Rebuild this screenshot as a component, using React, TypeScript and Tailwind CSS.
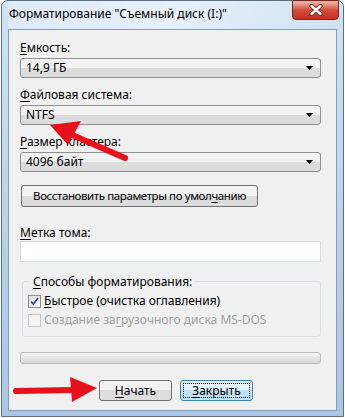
import type { ReactNode } from 'react'

const FONT = { fontFamily: '"Noto Sans", "Open Sans", sans-serif' }

function Key({ children }: { children: ReactNode }) {
  return <span className="underline decoration-1 underline-offset-2">{children}</span>
}

function Combo({ value }: { value: string }) {
  return (
    <div className="flex h-[20px] items-center justify-between rounded-[3px] border border-[#8e8f8f] bg-gradient-to-b from-[#f2f2f2] from-50% to-[#dcdcdc] to-50% pl-[5px] pr-[7px]">
      <span className="leading-none">{value}</span>
      <svg width="7" height="4" viewBox="0 0 7 4">
        <path d="M0 0h7L3.5 4z" fill="#000" />
      </svg>
    </div>
  )
}

function Label({ children, className = '' }: { children: ReactNode; className?: string }) {
  return <div className={`h-[16px] leading-[16px] ${className}`}>{children}</div>
}

export default function App() {
  return (
    <div className="relative h-[418px] w-[345px] overflow-hidden bg-white text-[12px] text-black" style={FONT}>
      {/* window frame */}
      <div className="ml-[1px] flex h-[417px] w-[343px] flex-col rounded-t-[7px] border border-[#5b6f85] bg-gradient-to-b from-[#d3e3f3] via-[#bcd4ec] to-[#a9c6e4] px-[6px] pb-[5px]">
        <div className="relative flex h-[28px] items-center">
          <div className="absolute inset-0 bg-gradient-to-r from-white/30 via-white/50 to-transparent" />
          <span className="relative pl-[1px] pb-[3px] text-[12px] text-black">Форматирование "Съемный диск (I:)"</span>
          <div className="absolute -top-[1px] right-[-2px] flex h-[20px] w-[47px] items-center justify-center rounded-b-[4px] border border-[#6d2a23] bg-gradient-to-b from-[#e9a99c] from-10% via-[#d24d3a] via-50% to-[#c9301f]">
            <svg width="14" height="12" viewBox="0 0 14 12">
              <path d="M2.5 2L11.5 10M11.5 2L2.5 10" stroke="#5a1d16" strokeWidth="4.2" strokeLinecap="round" />
              <path d="M2.5 2L11.5 10M11.5 2L2.5 10" stroke="#ffffff" strokeWidth="2.4" strokeLinecap="round" />
            </svg>
          </div>
        </div>

        {/* client area */}
        <div className="flex flex-1 flex-col border border-[#7f9db9] bg-[#f0f0f0] pl-[11px] pr-[15px]">
          <Label className="mt-[10px]">
            <Key>Е</Key>мкость:
          </Label>
          <div className="mt-[2px]">
            <Combo value="14,9 ГБ" />
          </div>
          <Label className="mt-[9px]">
            <Key>Ф</Key>айловая система:
          </Label>
          <div className="mt-[2px]">
            <Combo value="NTFS" />
          </div>
          <Label className="mt-[9px]">
            <Key>Р</Key>азмер кластера:
          </Label>
          <div className="mt-[2px]">
            <Combo value="4096 байт" />
          </div>

          <button className="mt-[13px] ml-[1px] h-[22px] w-[237px] whitespace-nowrap rounded-[3px] border border-[#707070] bg-gradient-to-b from-[#f2f2f2] from-50% to-[#dddddd] to-50% text-[11.5px] tracking-[-0.4px]">
            Восстановить параметры по умол<Key>ч</Key>анию
          </button>

          <Label className="mt-[18px]">
            <Key>М</Key>етка тома:
          </Label>
          <div className="h-[21px] border border-[#d5dbe3] bg-white" />

          <fieldset className="mt-[12px] ml-[2px] h-[63px] rounded-[3px] border border-[#d5dfe5] pl-[5px]">
            <legend className="ml-[2px] px-[3px] leading-[15px]">
              <Key>С</Key>пособы форматирования:
            </legend>
            <div className="mt-[4px] flex h-[16px] items-center gap-[3px]">
              <span className="flex h-[13px] w-[13px] items-center justify-center border border-[#8e8f8f] bg-gradient-to-br from-[#dcdcdc] to-[#fbfbfb]">
                <svg width="9" height="9" viewBox="0 0 9 9">
                  <path d="M1 4.5l2.3 2.5L8 1" stroke="#3a4e8e" strokeWidth="1.8" fill="none" />
                </svg>
              </span>
              <span>
                <Key>Б</Key>ыстрое (очистка оглавления)
              </span>
            </div>
            <div className="mt-[3px] flex h-[16px] items-center gap-[3px] text-[#a0a0a0]">
              <span className="h-[13px] w-[13px] border border-[#c8c8c8] bg-[#f4f4f4]" />
              <span>
                Создание за<Key>г</Key>рузочного диска MS-DOS
              </span>
            </div>
          </fieldset>

          <div className="mt-[15px] h-[12px] rounded-[3px] border border-[#bcbcbc] bg-gradient-to-b from-[#f3f3f3] to-[#d9d9d9]" />

          <div className="mt-[16px] flex justify-center gap-[8px] pl-[11px]">
            <button className="h-[21px] w-[73px] rounded-[3px] border border-[#707070] bg-gradient-to-b from-[#f2f2f2] from-50% to-[#dddddd] to-50%">
              <Key>Н</Key>ачать
            </button>
            <button className="h-[21px] w-[73px] rounded-[3px] border border-[#3c7fb1] bg-gradient-to-b from-[#e5f4fc] from-50% to-[#bfe3f6] to-50% p-[2px]">
              <span className="flex h-full w-full items-center justify-center border border-dotted border-black">
                <Key>З</Key>акрыть
              </span>
            </button>
          </div>
        </div>
      </div>

      {/* annotation arrows */}
      <svg className="pointer-events-none absolute left-0 top-0" width="345" height="418" viewBox="0 0 345 418">
        <line x1="125" y1="158" x2="70" y2="134" stroke="#e8101a" strokeWidth="6" strokeLinecap="round" />
        <path d="M50 125L81 121L68 145Z" fill="#e8101a" />
        <line x1="16" y1="391" x2="74" y2="390" stroke="#e8101a" strokeWidth="6" strokeLinecap="round" />
        <path d="M97 388L70 377L72 402Z" fill="#e8101a" />
      </svg>
    </div>
  )
}
